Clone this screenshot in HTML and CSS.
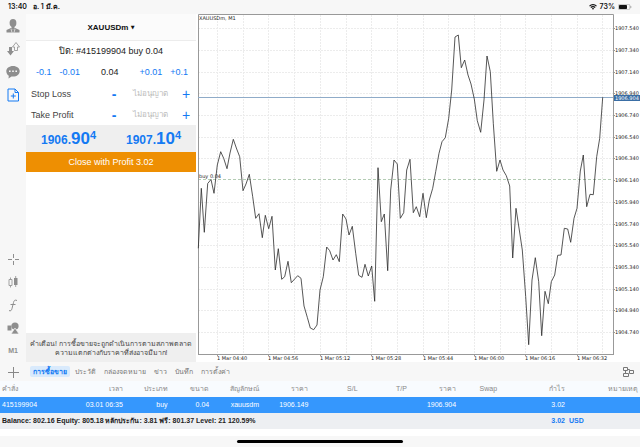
FILE: index.html
```
<!DOCTYPE html>
<html lang="th">
<head>
<meta charset="utf-8">
<title>XAUUSDm</title>
<link rel="stylesheet" href="styles.css">
</head>
<body>
<header class="status">
  <span class="clock">13:40</span><span class="date">อ. 1 มี.ค.</span>
  <svg class="wifi" viewBox="0 0 8 6" aria-hidden="true"><path d="M.5 2.1a5 5 0 0 1 7 0M1.8 3.5a3.1 3.1 0 0 1 4.4 0" fill="none" stroke="#111" stroke-width="1.1"/><path d="M2.8 4.5a1.7 1.7 0 0 1 2.4 0L4 5.8z" fill="#111"/></svg>
  <span>73%</span>
  <svg class="battery" viewBox="0 0 14 6" aria-hidden="true"><rect x=".3" y=".3" width="11.6" height="5.4" rx="1.5" fill="none" stroke="#999" stroke-width=".6"/><rect x="1" y="1" width="8" height="4" rx=".8" fill="#111"/><path d="M12.8 2v2" stroke="#999" stroke-width=".8"/></svg>
</header>
<main class="work">
  <nav class="rail">
    <button aria-label="Accounts"><svg viewBox="0 0 16 16"><ellipse cx="8" cy="5" rx="3.400" ry="4"/><path d="M6.500 8h3v3h-3z"/><path d="M1.500 14.500v-2.500l4.500-2 2 1.500 2-1.500 4.500 2v2.500z"/><path d="M6 11l1 3.500M10 11l-1 3.500" stroke="#f7f7f7" stroke-width=".7"/></svg></button>
    <button aria-label="Trade"><svg viewBox="0 0 16 16"><path d="M4 6h3v4h2l-3.500 4.500L2 10h2z"/><path d="M9.500 9.500V6H7.500l3.500-4.500L14.500 6h-2v3.500z" class="thin"/></svg></button>
    <button aria-label="Chat"><svg viewBox="0 0 16 16"><path d="M8 2c4 0 6.700 2.300 6.700 5.200S12 12.500 8 12.500l-1.500-.1L3.500 14.500l.3-2.800C2.200 10.700 1.300 9 1.300 7.200 1.300 4.300 4 2 8 2z"/><path d="M4 6.500h1.600v1.600H4zM7.200 6.500h1.600v1.600H7.200zM10.400 6.500H12v1.600h-1.600z" fill="#f7f7f7"/></svg></button>
    <button class="on" aria-label="New order"><svg viewBox="0 0 16 16"><path d="M3 2h7l3.500 3.500V14H3zM10 2v3.500h3.500M8.300 6.500v5M5.800 9h5" class="line"/></svg></button>
    <span class="spring"></span>
    <button aria-label="Crosshair"><svg viewBox="0 0 16 16"><path d="M8.500 3v4M8.500 10v4M3 8.500h4M10 8.500h4" class="line"/></svg></button>
    <button aria-label="Chart type"><svg viewBox="0 0 16 16"><path d="M4 5.500h3v6H4zM5.500 3.500v2M5.500 11.500v2" class="thin"/><path d="M9 4h3.500v7H9z"/><path d="M10.700 2v11" class="thin"/></svg></button>
    <button aria-label="Indicators"><svg viewBox="0 0 16 16"><path d="M12 3.500c-2-1-3 0-3.500 2L7 11.500c-.5 2-1.500 3-3 2M5.500 7.500h5" class="line"/></svg></button>
    <button aria-label="Objects"><svg viewBox="0 0 16 16"><path d="M2.500 5.500h4v5h-4z"/><circle cx="10" cy="6" r="3.600"/><path d="M10 8l4 6H6z" stroke="#f7f7f7" stroke-width=".7"/></svg></button>
    <button class="tf">M1</button>
  </nav>
  <section class="order">
    <h1 class="symbol"><button>XAUUSDm <small>▼</small></button></h1>
    <p class="line-title">ปิด: #415199904 buy 0.04</p>
    <div class="volume"><button>-0.1</button><button>-0.01</button><output>0.04</output><button>+0.01</button><button>+0.1</button></div>
    <div class="level"><label for="sl">Stop Loss</label><button class="minus">-</button><input id="sl" placeholder="ไม่อนุญาต"><button>+</button></div>
    <div class="level"><label for="tp">Take Profit</label><button class="minus">-</button><input id="tp" placeholder="ไม่อนุญาต"><button>+</button></div>
    <div class="quotes">
      <div class="quote"><span>1906.</span><b>90</b><sup>4</sup></div>
      <div class="quote"><span>1907.</span><b>10</b><sup>4</sup></div>
    </div>
    <button class="close">Close with Profit 3.02</button>
    <p class="warn">คำเตือน! การซื้อขายจะถูกดำเนินการตามสภาพตลาด ความแตกต่างกับราคาที่ส่งอาจมีมาก!</p>
  </section>
  <section class="chart">
    <svg viewBox="197 14 443 348" role="img" aria-label="XAUUSDm, M1">
      <path class="grid" d="M198 28.500H613M198 50.500H613M198 72.500H613M198 93.500H613M198 115.500H613M198 137.500H613M198 158.500H613M198 202.500H613M198 224.500H613M198 245.500H613M198 267.500H613M198 289.500H613M198 310.500H613M198 332.500H613M217.500 15V354M243.500 15V354M268.500 15V354M294.500 15V354M320.500 15V354M346.500 15V354M371.500 15V354M397.500 15V354M423.500 15V354M448.500 15V354M474.500 15V354M500.500 15V354M525.500 15V354M551.500 15V354M577.500 15V354M602.500 15V354"/>
      <path class="entry" d="M198 179.500H613"/>
      <path class="frame" d="M198.500 354V14.500H613.500V354M198 354.500H614"/>
      <path class="frame" d="M613 28.500h2M613 50.500h2M613 72.500h2M613 93.500h2M613 115.500h2M613 137.500h2M613 158.500h2M613 180.500h2M613 202.500h2M613 224.500h2M613 245.500h2M613 267.500h2M613 289.500h2M613 310.500h2M613 332.500h2M217.500 354v2M268.500 354v2M320.500 354v2M371.500 354v2M423.500 354v2M474.500 354v2M525.500 354v2M577.500 354v2"/>
      <path class="bid" d="M198 97.500H613"/>
      <polyline class="price" points="198.3,248.3 201.3,188.3 204.3,232.3 207.7,183.5 211,179.5 214,193.3 217.3,165 220.7,151.7 223.7,158.3 227,168.7 230,153 233.3,139.3 236.7,149 239.7,156.7 243,190.7 246,184 249.3,174.3 252.7,196.7 255.7,218.3 259,213.7 262.3,237.7 265.3,215.3 268.7,228.7 272,216.3 275.3,270 278.3,248.7 281.7,279.3 284.7,276.7 288,261.3 291.3,282.7 297.7,275.7 301,278.3 304,306 307.3,317.3 310.3,328 313.7,329.7 317,325 320,290 323.3,276.7 326.7,247 329.7,250.7 333,260 336.3,254.7 339.3,261.7 342.7,214 346,219 349,235 352.3,226.3 355.7,253.3 358.7,275.3 362,277.3 365,264.3 368.3,276 371.7,266 374.7,301.3 378,167.7 381.3,221.7 384.3,214 387.7,270.7 390.7,190 394,160 397.3,164 400.3,218.3 403.7,212.7 406.7,170 410,159.3 413.3,212.7 416.3,206.7 419.7,216.7 423,193.3 426.3,217.7 429.3,200 432.7,188.3 435.7,171.7 439,153.3 442,141.7 445.3,137.7 448.7,118.3 451.7,90 455,37 458.3,35 461.3,67.7 464.7,60 468,75 471,84 474.3,99 477.3,120.7 480.7,132.3 484,100 487,56 490.3,71.7 493.3,123.3 496.7,171.3 500,160 503,170 506.3,175.7 509.7,186 512.7,258 516,208.3 519.3,230 522.3,250 525.7,296.7 528.7,344.7 532,280 535.3,257.7 538.7,281.7 541.7,335.7 545,291.3 548.3,303.7 551.3,281.7 554.7,275 557.7,255.3 561,255 564.3,228.3 567.7,229 570.7,242.3 574,218.3 577,208.3 580.3,171 583.3,155 586.7,206.7 590,194.3 593.3,194.7 596.7,156.7 599.7,138.3 602.7,97.3"/>
      <text x="199" y="20">XAUUSDm, M1</text>
      <text x="199" y="178">buy 0.04</text>
      <g><text x="615" y="30">1907.540</text><text x="615" y="52">1907.340</text><text x="615" y="74">1907.140</text><text x="615" y="95">1906.940</text><text x="615" y="117">1906.740</text><text x="615" y="139">1906.540</text><text x="615" y="160">1906.340</text><text x="615" y="182">1906.140</text><text x="615" y="204">1905.940</text><text x="615" y="226">1905.740</text><text x="615" y="247">1905.540</text><text x="615" y="269">1905.340</text><text x="615" y="291">1905.140</text><text x="615" y="312">1904.940</text><text x="615" y="334">1904.740</text></g>
      <g><text x="217" y="360">1 Mar 04:40</text><text x="268" y="360">1 Mar 04:56</text><text x="320" y="360">1 Mar 05:12</text><text x="371" y="360">1 Mar 05:28</text><text x="423" y="360">1 Mar 05:44</text><text x="474" y="360">1 Mar 06:00</text><text x="525" y="360">1 Mar 06:16</text><text x="577" y="360">1 Mar 06:32</text></g>
      <rect class="tag" x="614" y="95" width="26" height="6"/>
      <text class="tag-text" x="615" y="100">1906.904</text>
    </svg>
  </section>
</main>
<section class="terminal">
  <nav class="tabs">
    <button class="add" aria-label="Add"><svg viewBox="0 0 12 12"><path d="M6.500 1v11M1 6.500h11" class="line"/></svg></button>
    <a class="tab current" href="#trade">การซื้อขาย</a><a class="tab" href="#history">ประวัติ</a><a class="tab" href="#mail">กล่องจดหมาย</a><a class="tab" href="#news">ข่าว</a><a class="tab" href="#journal">บันทึก</a><a class="tab" href="#settings">การตั้งค่า</a>
    <button class="layout" aria-label="Layout"><svg viewBox="0 0 12 12"><path d="M1.500 1.500h4v3h-4zM1.500 7.500h5v3h-5zM7.500 4.500h4v3h-4zM3.500 4.500v3M5.500 3.500h2v1" class="line"/></svg></button>
  </nav>
  <table class="deals">
    <colgroup><col class="c-id"><col class="c-time"><col class="c-type"><col class="c-size"><col class="c-sym"><col class="c-px"><col class="c-px"><col class="c-px"><col class="c-px"><col class="c-swap"><col class="c-profit"><col class="c-note"></colgroup>
    <thead><tr><th>คำสั่ง</th><th>เวลา</th><th>ประเภท</th><th>ขนาด</th><th>สัญลักษณ์</th><th>ราคา</th><th>S/L</th><th>T/P</th><th>ราคา</th><th>Swap</th><th>กำไร</th><th>หมายเหตุ</th></tr></thead>
    <tbody><tr><td>415199904</td><td>03.01 06:35</td><td>buy</td><td>0.04</td><td>xauusdm</td><td>1906.149</td><td></td><td></td><td>1906.904</td><td></td><td>3.02</td><td></td></tr></tbody>
    <tfoot><tr><td colspan="10">Balance: 802.16 Equity: 805.18 หลักประกัน: 3.81 ฟรี: 801.37 Level: 21 120.59%</td><td class="sum">3.02</td><td class="sum unit">USD</td></tr></tfoot>
  </table>
</section>
<footer class="home"><span class="bar"></span></footer>
</body>
</html>
```
FILE: styles.css
```
* { box-sizing: border-box; margin: 0; padding: 0; }
body { min-height: 100vh; display: flex; flex-direction: column; background: #fff; color: #222; font: 9px/12px "Liberation Sans", sans-serif; }
button, input { font: inherit; color: inherit; background: none; border: 0; }
svg { display: block; }
.line { fill: none; stroke: currentColor; stroke-width: 1; }
.thin { fill: none; stroke: currentColor; stroke-width: .8; }

.status { height: 14px; display: flex; align-items: center; gap: 3px; padding: 0 8px; background: #f7f7f7; color: #111; font: 600 7px/14px Inter, "Liberation Sans", sans-serif; }
.date { margin: 0 auto 0 3px; }
.wifi { width: 8px; height: 6px; }
.battery { width: 14px; height: 6px; }

.work { flex: 1; display: grid; grid-template-columns: 26px 170px 1fr; background: #fff; }
.rail { display: flex; flex-direction: column; align-items: center; background: #f7f7f7; }
.rail button { width: 24px; height: 23px; display: grid; place-items: center; color: #8e8e8e; }
.rail svg { width: 16px; height: 16px; fill: currentColor; }
.rail .on { color: #147af3; }
.spring { flex: 1; }
.rail .tf { font: bold 7px/12px "Liberation Sans", sans-serif; }

.order { display: flex; flex-direction: column; }
.symbol { height: 27px; display: grid; place-items: center; background: #fbfbfb; border-bottom: 1px solid #ececec; color: #111; font: bold 8px/12px "Liberation Sans", sans-serif; }
.symbol small { font: 5px/12px "DejaVu Sans", sans-serif; vertical-align: 1px; }
.line-title { height: 20px; line-height: 20px; text-align: center; }
.volume { height: 22px; display: flex; align-items: center; gap: 8px; padding: 0 8px 0 10px; }
.volume output { flex: 1; text-align: center; }
.volume button, .level button { color: #147af3; }
.level { height: 21px; display: grid; grid-template-columns: 1fr 16px 56px 16px; align-items: center; padding: 0 2px 0 5px; }
.level label { color: #444; }
.level button { font-size: 14px; }
.level .minus { font-weight: bold; }
.level input { width: 100%; text-align: center; font-size: 8px; }
.level input::placeholder { color: #bbb; opacity: 1; }
.quotes { height: 27px; display: grid; grid-template-columns: 1fr 1fr; background: #efefef; }
.quote { display: flex; align-items: baseline; justify-content: center; color: #147af3; font: bold 12px/27px "Liberation Sans", sans-serif; }
.quote b { font-size: 17px; }
.quote sup { font-size: 11px; align-self: flex-start; line-height: 21px; }
.close { height: 20px; background: #ee8f02; color: #fff; }
.warn { margin-top: auto; height: 29px; padding: 6px 4px; background: #efefef; color: #444; text-align: center; font-size: 7px; line-height: 9px; }

.chart { padding-left: 1px; }
.chart svg { width: 100%; height: auto; }
.chart text { font: 5px "DejaVu Sans", sans-serif; fill: #222; }
.grid { stroke: #ececec; stroke-dasharray: 2 1; }
.entry { stroke: #b4ccb4; stroke-dasharray: 3 2; }
.frame { fill: none; stroke: #999; }
.price { fill: none; stroke: #2c2c2c; stroke-width: .8; }
.bid { stroke: #8fabc8; }
.tag { fill: #3a6ea5; }
.chart .tag-text { fill: #fff; }

.tabs { height: 19px; display: flex; align-items: center; background: #f7f7f7; font-size: 7px; line-height: 11px; }
.add { width: 26px; margin-right: 3px; display: grid; place-items: center; color: #888; }
.tabs svg { width: 12px; height: 12px; }
.tab { margin: 0 1px; padding: 0 3px; color: #777; text-decoration: none; border-radius: 2px; }
.current { background: #d9eafc; color: #147af3; font-weight: bold; }
.layout { margin: 0 6px 0 auto; color: #777; }

.deals { width: 100%; table-layout: fixed; border-collapse: collapse; font-size: 7px; line-height: 16px; text-align: right; }
.deals th, .deals td { height: 16px; padding: 0 2px; font-weight: normal; white-space: nowrap; }
.deals tr > :first-child { text-align: left; }
.deals thead { background: #f8fbfe; color: #888; }
.deals tbody { background: #3597fd; color: #fff; }
.deals tfoot { background: #edeff2; color: #222; }
.deals tfoot td { font-weight: bold; }
.deals .sum { color: #147af3; }
.deals .unit { text-align: left; }
.c-id { width: 9%; }
.c-time { width: 10.5%; }
.c-type { width: 7%; }
.c-size { width: 6.5%; }
.c-sym { width: 7.8%; }
.c-px { width: 7.7%; }
.c-swap { width: 6.4%; }
.c-profit { width: 10.6%; }

.home { height: 18px; padding-top: 11px; background: linear-gradient(#fff 7px, #f7f7f7 7px); }
.bar { display: block; width: 26%; height: 3px; margin: 0 auto; border-radius: 2px; background: #000; }
```
